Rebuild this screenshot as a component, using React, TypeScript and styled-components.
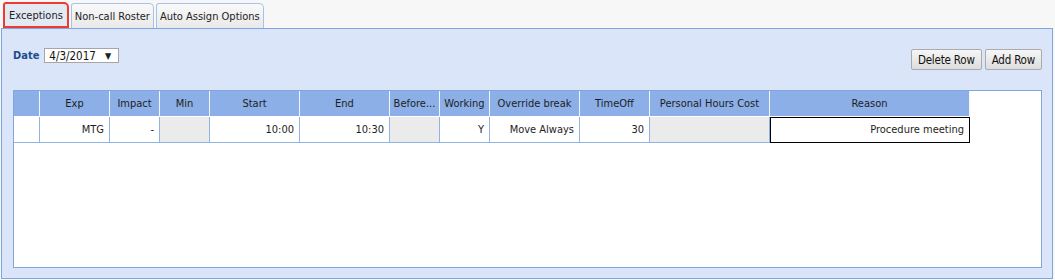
import React from 'react';
import styled, { createGlobalStyle } from 'styled-components';

const GlobalStyle = createGlobalStyle`
  html, body {
    margin: 0;
    padding: 0;
    background: #f7f7f7;
  }
  body {
    font-family: "DejaVu Sans Condensed", "DejaVu Sans", sans-serif;
    font-stretch: condensed;
    font-size: 11px;
    color: #1e1e1e;
  }
`;

type Column = { title: string; width: number };

const columns: Column[] = [
  { title: '', width: 26 },
  { title: 'Exp', width: 70 },
  { title: 'Impact', width: 50 },
  { title: 'Min', width: 50 },
  { title: 'Start', width: 90 },
  { title: 'End', width: 90 },
  { title: 'Before...', width: 50 },
  { title: 'Working', width: 50 },
  { title: 'Override break', width: 90 },
  { title: 'TimeOff', width: 70 },
  { title: 'Personal Hours Cost', width: 120 },
  { title: 'Reason', width: 200 },
];

// значения строки; null = неактивная (серая) ячейка
const row: (string | null)[] = [
  '', 'MTG', '-', null, '10:00', '10:30', null, 'Y', 'Move Always', '30', null, 'Procedure meeting',
];

const tabs = ['Exceptions', 'Non-call Roster', 'Auto Assign Options'];

const App: React.FC = () => {
  return (
    <>
      <GlobalStyle />
      <Page>
        <TabStrip>
          {tabs.map((t, i) => (
            <Tab key={t} $active={i === 0}>{t}</Tab>
          ))}
        </TabStrip>
        <Panel>
          <Toolbar>
            <DateField>
              <DateLabel>Date</DateLabel>
              <DateSelect>
                <span>4/3/2017</span>
                <Arrow>▼</Arrow>
              </DateSelect>
            </DateField>
            <Actions>
              <Button>Delete Row</Button>
              <Button>Add Row</Button>
            </Actions>
          </Toolbar>
          <GridBox>
            <Table>
              <colgroup>
                {columns.map((c, i) => (
                  <col key={i} style={{ width: c.width }} />
                ))}
                <col />
              </colgroup>
              <thead>
                <tr>
                  {columns.map((c, i) => (
                    <HeadCell key={i}>{c.title}</HeadCell>
                  ))}
                  <Filler />
                </tr>
              </thead>
              <tbody>
                <tr>
                  {row.map((v, i) => (
                    <BodyCell key={i} $disabled={v === null} $editing={i === row.length - 1}>
                      {v}
                    </BodyCell>
                  ))}
                  <Filler />
                </tr>
              </tbody>
            </Table>
          </GridBox>
        </Panel>
      </Page>
    </>
  );
};

const Page = styled.div`
  width: 1055px;
  height: 280px;
  padding-left: 1px;
  box-sizing: border-box;
`;

const TabStrip = styled.div`
  display: flex;
  align-items: flex-end;
  gap: 2px;
  height: 28px;
  padding-left: 2px;
`;

const Tab = styled.div<{ $active?: boolean }>`
  box-sizing: border-box;
  height: ${p => (p.$active ? 26 : 25)}px;
  padding: 0 ${p => (p.$active ? 4 : 3)}px;
  display: flex;
  align-items: center;
  color: #222;
  white-space: nowrap;
  border: ${p => (p.$active ? '2px solid #ec3b32' : '1px solid #a7c2e8')};
  border-bottom: ${p => (p.$active ? '2px solid #ec3b32' : 'none')};
  border-radius: 3px 5px 0 0;
  background: ${p =>
    p.$active ? '#e3e9f3' : 'linear-gradient(#f9f9f9, #e9e9e9)'};
`;

const Panel = styled.div`
  box-sizing: border-box;
  width: 1052px;
  height: 251px;
  border: 1px solid #7fa7de;
  background: #dae5f9;
  padding: 0 10px 10px 11px;
  display: flex;
  flex-direction: column;
`;

const Toolbar = styled.div`
  display: flex;
  justify-content: space-between;
  align-items: flex-start;
  padding-top: 19px;
`;

const DateField = styled.div`
  display: flex;
  align-items: center;
  gap: 5px;
`;

const DateLabel = styled.span`
  font-weight: bold;
  color: #1d4d8b;
`;

const DateSelect = styled.div`
  box-sizing: border-box;
  width: 75px;
  height: 15px;
  background: #fff;
  border: 1px solid #a6a6a6;
  display: flex;
  align-items: center;
  justify-content: space-between;
  padding: 0 7px 0 4px;
  font-size: 11.5px;
  color: #111;
`;

const Arrow = styled.span`
  font-size: 9px;
  color: #222;
`;

const Actions = styled.div`
  display: flex;
  gap: 3px;
  margin-top: 1px;
`;

const Button = styled.button`
  box-sizing: border-box;
  height: 21px;
  padding: 0 6px;
  font: inherit;
  font-size: 11.5px;
  letter-spacing: -0.2px;
  color: #111;
  border: 1px solid #ababab;
  border-radius: 2px;
  background: linear-gradient(#f6f6f6, #dddddd);
`;

const GridBox = styled.div`
  margin-top: 20px;
  flex: 1;
  box-sizing: border-box;
  border: 1px solid #7fa7de;
  background: #fff;
`;

const Table = styled.table`
  border-collapse: separate;
  border-spacing: 0;
  table-layout: fixed;
  width: 100%;
`;

const HeadCell = styled.th`
  box-sizing: border-box;
  height: 26px;
  padding: 0 2px;
  background: #8bafe6;
  border-right: 1px solid #f2f6fc;
  border-bottom: 1px solid #ffffff;
  font-weight: normal;
  color: #1e1e1e;
  text-align: center;
  white-space: nowrap;
  overflow: hidden;
  text-overflow: ellipsis;
`;

const Filler = styled.td`
  background: #fff;
`;

const BodyCell = styled.td<{ $disabled?: boolean; $editing?: boolean }>`
  box-sizing: border-box;
  height: 26px;
  padding: 0 5px;
  text-align: right;
  white-space: nowrap;
  background: ${p => (p.$disabled ? '#ebebeb' : '#fff')};
  border-right: 1px solid #8fb3e6;
  border-bottom: 1px solid #8fb3e6;
  ${p => (p.$editing ? 'outline: 1px solid #000; outline-offset: -1px;' : '')}
`;

export default App;
